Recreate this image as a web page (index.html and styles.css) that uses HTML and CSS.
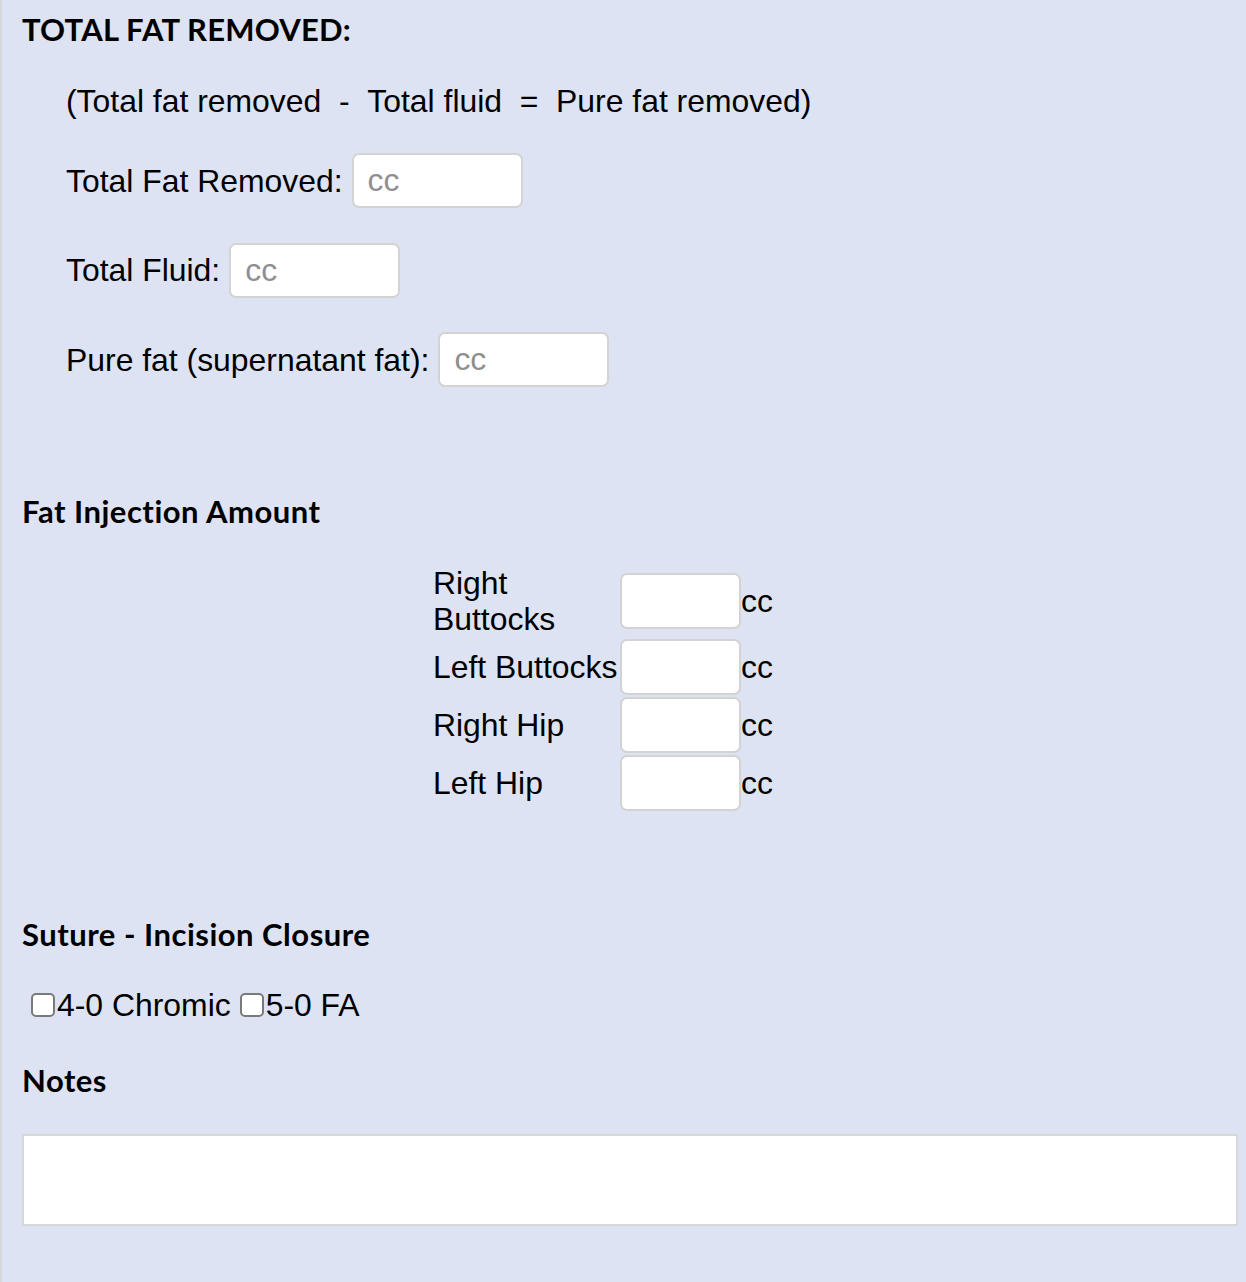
FILE: index.html
```html
<!DOCTYPE html>
<html lang="en">
<head>
<meta charset="utf-8">
<title>Fat Removal Form</title>
<link rel="stylesheet" href="styles.css">
</head>
<body>
<div class="page">
  <h2 class="heading heading-first">TOTAL FAT REMOVED:</h2>
  <div class="indent">
    <p class="formula">(Total fat removed&nbsp; - &nbsp;Total fluid&nbsp; = &nbsp;Pure fat removed)</p>
    <div class="field-row field-row-first">
      <label class="field-label">Total Fat Removed:</label>
      <input class="text-input" type="text" placeholder="cc">
    </div>
    <div class="field-row">
      <label class="field-label">Total Fluid:</label>
      <input class="text-input" type="text" placeholder="cc">
    </div>
    <div class="field-row">
      <label class="field-label">Pure fat (supernatant fat):</label>
      <input class="text-input" type="text" placeholder="cc">
    </div>
  </div>

  <h2 class="heading heading-injection">Fat Injection Amount</h2>
  <table class="inj-table">
    <tr>
      <td class="inj-label">Right Buttocks</td>
      <td class="inj-field"><div class="inj-wrap"><input class="small-input" type="text">cc</div></td>
    </tr>
    <tr>
      <td class="inj-label">Left Buttocks</td>
      <td class="inj-field"><div class="inj-wrap"><input class="small-input" type="text">cc</div></td>
    </tr>
    <tr>
      <td class="inj-label">Right Hip</td>
      <td class="inj-field"><div class="inj-wrap"><input class="small-input" type="text">cc</div></td>
    </tr>
    <tr>
      <td class="inj-label">Left Hip</td>
      <td class="inj-field"><div class="inj-wrap"><input class="small-input" type="text">cc</div></td>
    </tr>
  </table>

  <h2 class="heading heading-suture">Suture - Incision Closure</h2>
  <div class="checks">
    <label class="check"><input class="checkbox" type="checkbox">4-0 Chromic</label>
    <label class="check"><input class="checkbox" type="checkbox">5-0 FA</label>
  </div>

  <h2 class="heading heading-notes">Notes</h2>
  <textarea class="notes"></textarea>
</div>
</body>
</html>
```

FILE: styles.css
```css
html, body {
  margin: 0;
  padding: 0;
}
body {
  background: #dde3f2;
  font-family: "Liberation Sans", Arial, Helvetica, sans-serif;
  font-size: 31.9px;
  color: #000;
  min-height: 1282px;
}
.page {
  border-left: 2px solid #d5d7dc;
  min-height: 1282px;
  box-sizing: border-box;
  padding: 9px 8px 0 20px;
}
.heading {
  font-family: Lato, "Open Sans", sans-serif;
  font-weight: 700;
  font-size: 31px;
  letter-spacing: 0.5px;
  line-height: 40px;
  margin: 0;
  color: #000;
}
.heading-first {
  letter-spacing: 0.2px;
}
.indent {
  padding-left: 44px;
}
.formula {
  margin: 34px 0 0 0;
  line-height: 36px;
}
.field-row {
  display: flex;
  align-items: center;
  gap: 9px;
  margin-top: 34.5px;
}
.field-row-first {
  margin-top: 34px;
}
.field-label {
  line-height: 36px;
}
.text-input {
  box-sizing: border-box;
  width: 171px;
  height: 55px;
  margin: 0;
  border: 2px solid #d3d3d3;
  border-radius: 7px;
  background: #fff;
  padding: 0 14px;
  font-family: "Liberation Sans", Arial, sans-serif;
  font-size: 31.9px;
  color: #000;
  outline: none;
}
.text-input::placeholder {
  color: #8f8f8f;
}
.heading-injection {
  margin-top: 104px;
}
.inj-table {
  margin: 32px 0 0 409px;
  border-spacing: 2px;
  line-height: 36px;
}
.inj-table td {
  padding: 0;
  vertical-align: middle;
}
.inj-label {
  width: 185px;
}
.inj-wrap {
  display: flex;
  align-items: center;
  white-space: nowrap;
}
.small-input {
  box-sizing: border-box;
  width: 121px;
  height: 56px;
  border: 2px solid #d3d3d3;
  border-radius: 7px;
  background: #fff;
  margin: 0;
  outline: none;
}
.heading-suture {
  margin-top: 101px;
}
.checks {
  margin-top: 33px;
  padding-left: 9px;
  display: flex;
  align-items: center;
  line-height: 36px;
}
.check {
  display: inline-flex;
  align-items: center;
  margin-right: 9px;
}
.checkbox {
  appearance: none;
  -webkit-appearance: none;
  box-sizing: border-box;
  width: 24px;
  height: 24px;
  margin: 0 2px 0 0;
  border: 2px solid #7a7a7a;
  border-radius: 5px;
  background: #fff;
}
.heading-notes {
  margin-top: 37px;
}
.notes {
  display: block;
  box-sizing: border-box;
  width: 1216px;
  height: 92px;
  margin-top: 34px;
  border: 2px solid #d8d8d8;
  background: #fff;
  resize: none;
  outline: none;
}
```
